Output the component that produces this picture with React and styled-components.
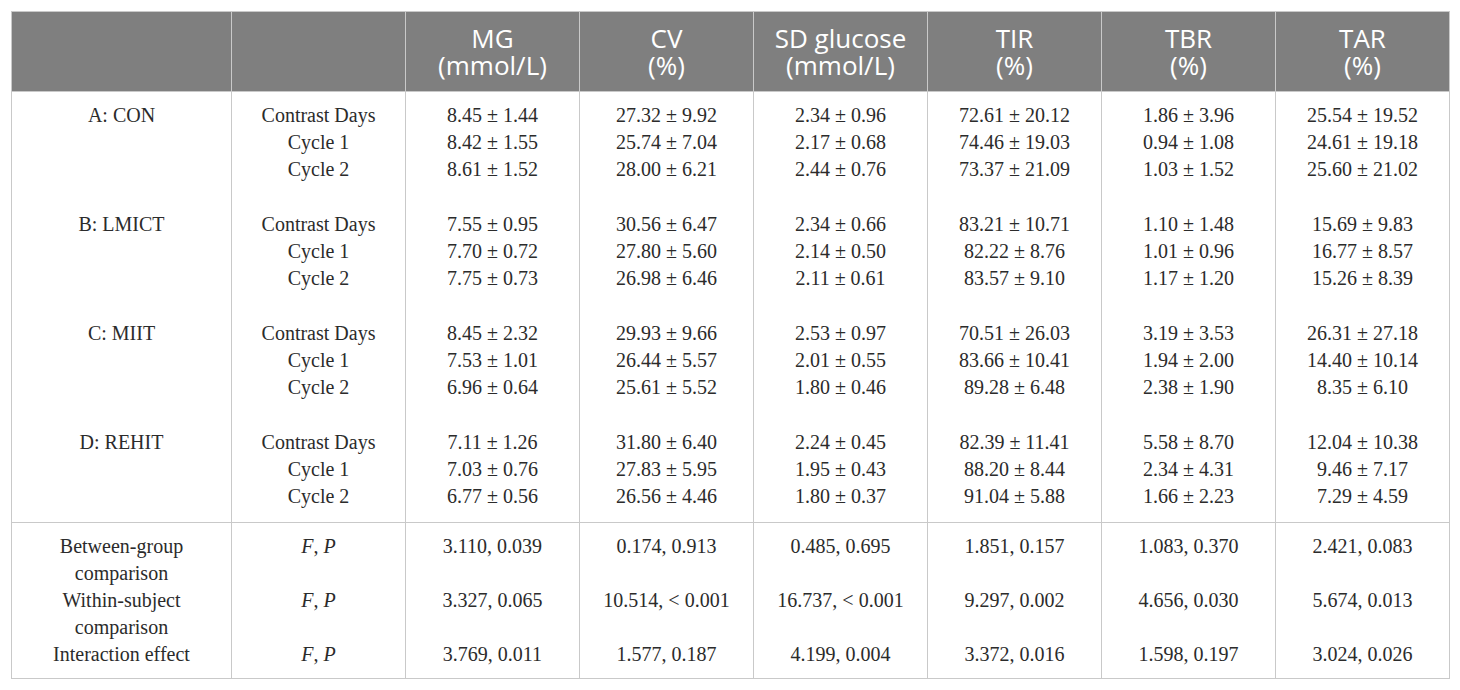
import React from "react";
import styled, { createGlobalStyle } from "styled-components";

const GlobalStyle = createGlobalStyle`
  html, body {
    margin: 0;
    padding: 0;
    background: #ffffff;
  }
`;

const columns = [
  ["MG", "(mmol/L)"],
  ["CV", "(%)"],
  ["SD glucose", "(mmol/L)"],
  ["TIR", "(%)"],
  ["TBR", "(%)"],
  ["TAR", "(%)"],
];

const stages = ["Contrast Days", "Cycle 1", "Cycle 2"];

const groups = [
  {
    name: "A: CON",
    values: [
      ["8.45 ± 1.44", "27.32 ± 9.92", "2.34 ± 0.96", "72.61 ± 20.12", "1.86 ± 3.96", "25.54 ± 19.52"],
      ["8.42 ± 1.55", "25.74 ± 7.04", "2.17 ± 0.68", "74.46 ± 19.03", "0.94 ± 1.08", "24.61 ± 19.18"],
      ["8.61 ± 1.52", "28.00 ± 6.21", "2.44 ± 0.76", "73.37 ± 21.09", "1.03 ± 1.52", "25.60 ± 21.02"],
    ],
  },
  {
    name: "B: LMICT",
    values: [
      ["7.55 ± 0.95", "30.56 ± 6.47", "2.34 ± 0.66", "83.21 ± 10.71", "1.10 ± 1.48", "15.69 ± 9.83"],
      ["7.70 ± 0.72", "27.80 ± 5.60", "2.14 ± 0.50", "82.22 ± 8.76", "1.01 ± 0.96", "16.77 ± 8.57"],
      ["7.75 ± 0.73", "26.98 ± 6.46", "2.11 ± 0.61", "83.57 ± 9.10", "1.17 ± 1.20", "15.26 ± 8.39"],
    ],
  },
  {
    name: "C: MIIT",
    values: [
      ["8.45 ± 2.32", "29.93 ± 9.66", "2.53 ± 0.97", "70.51 ± 26.03", "3.19 ± 3.53", "26.31 ± 27.18"],
      ["7.53 ± 1.01", "26.44 ± 5.57", "2.01 ± 0.55", "83.66 ± 10.41", "1.94 ± 2.00", "14.40 ± 10.14"],
      ["6.96 ± 0.64", "25.61 ± 5.52", "1.80 ± 0.46", "89.28 ± 6.48", "2.38 ± 1.90", "8.35 ± 6.10"],
    ],
  },
  {
    name: "D: REHIT",
    values: [
      ["7.11 ± 1.26", "31.80 ± 6.40", "2.24 ± 0.45", "82.39 ± 11.41", "5.58 ± 8.70", "12.04 ± 10.38"],
      ["7.03 ± 0.76", "27.83 ± 5.95", "1.95 ± 0.43", "88.20 ± 8.44", "2.34 ± 4.31", "9.46 ± 7.17"],
      ["6.77 ± 0.56", "26.56 ± 4.46", "1.80 ± 0.37", "91.04 ± 5.88", "1.66 ± 2.23", "7.29 ± 4.59"],
    ],
  },
];

const stats = [
  { label: ["Between-group", "comparison"], values: ["3.110, 0.039", "0.174, 0.913", "0.485, 0.695", "1.851, 0.157", "1.083, 0.370", "2.421, 0.083"] },
  { label: ["Within-subject", "comparison"], values: ["3.327, 0.065", "10.514, < 0.001", "16.737, < 0.001", "9.297, 0.002", "4.656, 0.030", "5.674, 0.013"] },
  { label: ["Interaction effect"], values: ["3.769, 0.011", "1.577, 0.187", "4.199, 0.004", "3.372, 0.016", "1.598, 0.197", "3.024, 0.026"] },
];

const App = () => {
  return (
    <Page>
      <GlobalStyle />
      <Table>
        <colgroup>
          <col style={{ width: 220 }} />
          <col style={{ width: 174 }} />
          {columns.map((c) => (
            <col key={c[0]} style={{ width: 174 }} />
          ))}
        </colgroup>
        <thead>
          <tr>
            <HeadCell />
            <HeadCell />
            {columns.map((c) => (
              <HeadCell key={c[0]}>
                <Line>{c[0]}</Line>
                <Line>{c[1]}</Line>
              </HeadCell>
            ))}
          </tr>
        </thead>
        <tbody>
          {groups.map((g, gi) => {
            const last = gi === groups.length - 1;
            return (
              <tr key={g.name}>
                <Cell $last={last}>
                  <Line>{g.name}</Line>
                </Cell>
                <Cell $last={last}>
                  {stages.map((s) => (
                    <Line key={s}>{s}</Line>
                  ))}
                </Cell>
                {columns.map((c, ci) => (
                  <Cell key={c[0]} $last={last}>
                    {g.values.map((row, ri) => (
                      <Line key={ri}>{row[ci]}</Line>
                    ))}
                  </Cell>
                ))}
              </tr>
            );
          })}
        </tbody>
        <StatsBody>
          {stats.map((s, si) => {
            const edge = si === 0 ? "top" : si === stats.length - 1 ? "bottom" : "";
            return (
              <tr key={s.label[0]}>
                <StatCell $edge={edge}>
                  {s.label.map((l) => (
                    <Line key={l}>{l}</Line>
                  ))}
                </StatCell>
                <StatCell $edge={edge}>
                  <Line>
                    <i>F</i>, <i>P</i>
                  </Line>
                </StatCell>
                {s.values.map((v, vi) => (
                  <StatCell key={vi} $edge={edge}>
                    <Line>{v}</Line>
                  </StatCell>
                ))}
              </tr>
            );
          })}
        </StatsBody>
      </Table>
    </Page>
  );
};

export default App;

const Page = styled.div`
  padding: 11px 0 0 11px;
`;

const Table = styled.table`
  border-collapse: collapse;
  table-layout: fixed;
  width: 1439px;
  color: #2b2b2b;
  font-family: "Liberation Serif", "Times New Roman", serif;
  font-size: 20px;

  td,
  th {
    border-left: 1px solid #c9c9c9;
    border-right: 1px solid #c9c9c9;
    text-align: center;
    vertical-align: top;
  }
`;

const Line = styled.div`
  line-height: 27px;
  white-space: nowrap;
`;

const HeadCell = styled.th`
  background: #7f7f7f;
  color: #ffffff;
  font-family: "Open Sans", "Liberation Sans", sans-serif;
  font-weight: 400;
  font-size: 26px;
  height: 79px;
  padding: 0;
  vertical-align: middle !important;
  border-top: 1px solid #c9c9c9;
  border-bottom: 1px solid #c9c9c9;
`;

const Cell = styled.td`
  padding: ${(p) => (p.$last ? "10px 0 12px" : "10px 0 18px")};
`;

const StatsBody = styled.tbody`
  border-top: 1px solid #c9c9c9;
  border-bottom: 1px solid #c9c9c9;
`;

const StatCell = styled.td`
  height: 54px;
  padding: ${(p) =>
    p.$edge === "top" ? "10px 0 0" : p.$edge === "bottom" ? "0 0 10px" : "0"};
  ${(p) => p.$edge === "bottom" && "height: 27px;"}
`;
